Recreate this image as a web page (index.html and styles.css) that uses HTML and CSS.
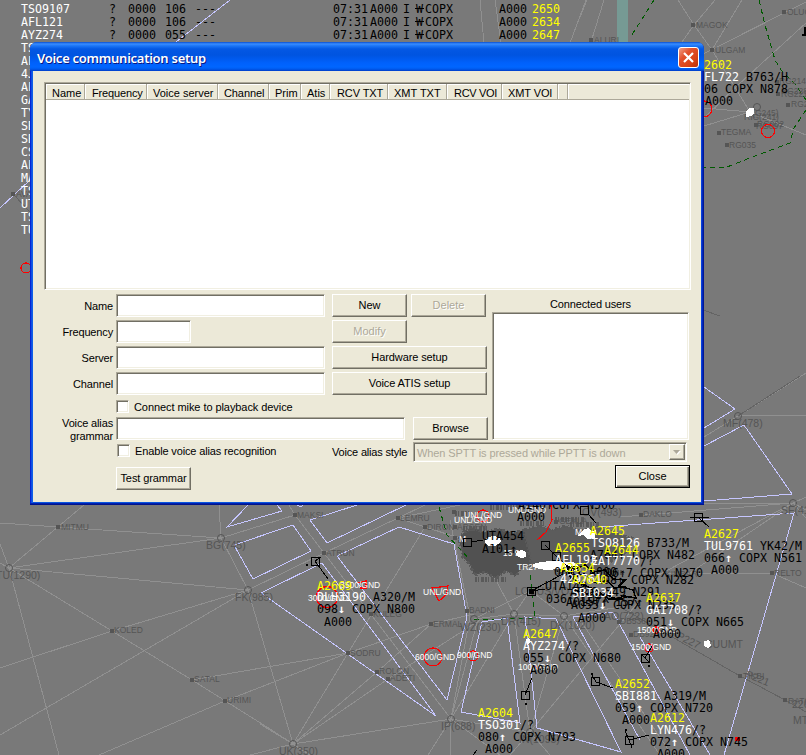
FILE: index.html
```html
<!DOCTYPE html>
<html lang="en">
<head>
<meta charset="utf-8">
<title>Voice communication setup</title>
<link rel="stylesheet" href="styles.css">
</head>
<body>
<svg class="radar" width="806" height="755" viewBox="0 0 806 755">
  <!-- airways -->
  <path class="airway" d="M480 0L484 43M495 0L501 43M586 0L570 43M587 0L580 17M604 0L591 42M678 0L694 25L715 0M694 25L682 42M694 25L712 50L742 0M712 50L750 112M703 54L806 2M806 23L738 85L704 118M704 108L750 112L704 126M750 112L806 135M14 195L30 212
  M0 523L58 527L221 538M84 505L9 568L221 538M9 568L248 590M9 568L112 631L192 680L270 729L310 755M9 568L59 755M0 544L9 568L0 563M0 668L112 631L248 590L0 735M248 590L293 744M219 505L221 538L248 590L324 553L398 518L425 505M221 538L295 515L324 553L451 719M295 515L289 505M192 680L348 653M99 755L225 701L348 653L431 624L474 614M250 755L293 744L451 719M425 527L348 653L293 744L388 679L480 620M293 744L377 672L431 624M293 744L260 724M293 744L310 755
  M451 719L428 755M451 719L450 755M451 719L470 617L450 520M451 719L478 619M451 719L500 755M451 719L514 614L485 560M474 619L514 614L564 616L620 607M514 614L530 732L550 755M530 732L564 616L531 591M530 732L510 755M451 719L530 732L640 600M514 614L530 591L474 619M564 616L660 755M580 620L672 755
  M704 437L738 416L806 415M738 416L806 373M704 503L793 503L620 517M793 503L640 585M793 503L690 573M793 503L806 497M793 503L806 518M793 503L806 510M640 573L772 573L806 588M398 518L480 545M398 518L460 505"/>
  <path class="airway deep" d="M738 416L800 376M703 310L720 316M620 607L740 676L785 700L806 712M14 195L30 212"/>
  <!-- terrain of overlapping labels around the hub -->
  <path class="terrain" d="M459 539L464 532L474 529L484 532L500 529L512 533L524 530L534 534L530 548L538 556L534 565L522 567L516 576L506 571L496 578L484 572L474 575L470 564L463 558Z"/>
  <path class="terrain light" d="M524 530L540 526L552 530L566 526L580 531L600 527L616 534L632 538L626 552L612 560L600 572L580 566L560 574L546 562L532 566Z"/>
  <path class="clutter" d="M463 528H488M520 523H545M570 524H600M475 579H506M490 507H540M455 513H470M555 519H584M590 572H625"/>
  <!-- borders -->
  <path class="border" d="M654 0L630 38M759 0L765 25L775 60L781 70L795 84L806 100M806 110L794 128L790 143L750 158L727 167L704 167M439 507L447 535L470 560M530 575L535 618L470 620"/>
  <rect class="river" x="617" y="0" width="11" height="43"/>
  <!-- sectors -->
  <path class="sector" d="M176 42L230 0M0 208L30 180M248 505L227 527L282 511L277 505M234 545L293 525L311 551L253 579ZM297 505L301 507L303 505M357 505L310 520L327 543L406 505M261 593L322 563L436 716ZM337 556L399 527L454 544L467 617L447 700ZM482 622L507 618L520 723L461 712ZM525 617L556 619L621 752L537 728ZM640 740L573 617L613 612L690 755M640 637L710 755M704 387L735 409L704 428M704 446L744 425L792 494L704 501M600 527L794 513L724 755"/>
  <!-- radio beacons -->
  <g class="beacon">
    <circle cx="221" cy="538" r="3.5"/><circle cx="9" cy="568" r="3.5"/><circle cx="248" cy="590" r="3.5"/><circle cx="293" cy="744" r="3.5"/><circle cx="451" cy="719" r="3.5"/><circle cx="474" cy="619" r="3.5"/><circle cx="514" cy="614" r="3.5"/><circle cx="564" cy="616" r="3.5"/><circle cx="530" cy="732" r="3.5"/><circle cx="738" cy="416" r="3.5"/><circle cx="793" cy="503" r="3.5"/><circle cx="757" cy="107" r="3.5"/>
  </g>
  <g class="beacon-name">
    <text x="206" y="549">BG(745)</text><text x="-4" y="579">TU(1290)</text><text x="235" y="601">FK(985)</text><text x="279" y="755">UK(350)</text><text x="441" y="730">IP(688)</text><text x="460" y="631">WZ(230)</text><text x="501" y="625">DR(415)</text><text x="550" y="629">DK(1020)</text><text x="519" y="743">IN(1095)</text><text x="723" y="427">MF(478)</text><text x="781" y="514">SF(413)</text><text x="582" y="516">OV(493)</text><text x="604" y="620">AO(722)</text><text x="515" y="595">LOUUS/VOJL</text><text x="793" y="724">MTA</text><text x="705" y="648">CUUMT</text>
    <text transform="translate(676 638) rotate(27)">P227</text><text transform="translate(745 677) rotate(22)">P221</text><text x="792" y="708">226</text>
  </g>
  <!-- fixes -->
  <path class="fix" d="M11 194h4M691 25h4M710 50h4M589 40h4M782 12h4M775 82h4M776 94h4M786 105h4M717 133h4M725 145h4M56 527h4M110 631h4M190 680h4M223 701h4M293 515h4M322 553h4M396 518h4M423 527h4M369 614h4M429 624h4M346 653h4M375 672h4M386 679h4M465 611h4M639 515h4M770 573h4M738 676h4M783 700h4M629 635h4M754 125h4M554 522h4M617 622h4M452 512h4M453 527h4M453 538h4"/>
  <g class="fix-name">
    <text x="16" y="197">AVA</text><text x="696" y="28">MAGOK</text><text x="715" y="53">ULGAM</text><text x="594" y="43">ALURI</text><text x="787" y="15">OLUG</text><text x="779" y="84">RG214</text><text x="781" y="94">RG228</text><text x="781" y="97">RG221</text><text x="791" y="107">RG2</text><text x="721" y="135">TEGMA</text><text x="729" y="148">RG035</text><text x="746" y="116">R(G245)</text><text x="744" y="120">RIG(241)</text><text x="757" y="127">RG002</text><text x="756" y="129">RG097</text>
    <text x="61" y="530">MITMU</text><text x="114" y="633">KOLED</text><text x="194" y="682">SATAL</text><text x="227" y="703">URIMI</text><text x="61" y="762">IDAMO</text><text x="297" y="518">MAKSI</text><text x="326" y="556">ATRUN</text><text x="400" y="521">LEMRU</text><text x="427" y="530">DIRON</text><text x="373" y="617">KULEG</text><text x="433" y="627">ERMAL</text><text x="350" y="656">SODRU</text><text x="379" y="674">ROLON</text><text x="390" y="681">ADETI</text><text x="469" y="613">BADNI</text><text x="643" y="517">DAKLO</text><text x="774" y="576">RELTO</text><text x="743" y="679">TIKBI</text><text x="788" y="704">RATO</text><text x="633" y="637">DB920</text><text x="559" y="524">GEKLA</text><text x="620" y="624">DB538</text><text x="665" y="577">KIMBAR</text><text x="457" y="530">ARSEN</text>
  </g>
  <!-- restricted areas -->
  <g class="danger">
    <circle cx="26" cy="268" r="5"/><circle cx="768" cy="131" r="6.5"/><circle cx="704" cy="109" r="8"/><circle cx="327" cy="597" r="10.5"/><circle cx="433" cy="657" r="9"/><circle cx="473" cy="656" r="5"/><circle cx="483" cy="516" r="6"/><circle cx="656" cy="630" r="3"/><circle cx="649" cy="648" r="4"/>
    <path d="M432 588L448 586L446 595L439 601ZM551 505L552 520L546 532L537 540M357 583L366 581L366 588L360 588M535 666L538 669M736 738h3v2h-3z"/>
  </g>
  <g class="area-name">
    <text x="308" y="601">3000/GND</text><text x="340" y="588">3500/GND</text><text x="423" y="595">UNL/GND</text><text x="415" y="660">6000/GND</text><text x="457" y="658">900/GND</text><text x="464" y="518">UNL/GND</text><text x="454" y="523">UNL/GND</text><text x="508" y="513">UNL/GND</text><text x="518" y="670">1000/GND</text><text x="637" y="633">1500/GND</text><text x="631" y="650">1500/GND</text><text x="517" y="570">TR27</text><text x="503" y="556">15 9</text><text x="575" y="535">M</text><text x="459" y="542">M</text>
  </g>
  <path class="echo" d="M486 538l6-2 8 1 1 5-6 4-7 0-3-3zM517 551l5-1 4 2 0 5-5 1-5-3zM533 564l8-2 10-1 13 1 9 0 5 3-1 6-10 0-8-2-12 1-8-1-6-2zM584 529l5-1 2 3 5-1-1 8-8 1-3-4-6 1zM746 112l3-4 5 0 0 5-3 3-5 1zM704 641l5-1 2 5-3 3-4-2zM526 639l3-1 2 4-4 3z"/>
  <!-- aircraft symbols and leader lines -->
  <path class="plane" d="M311.5 557.5h8v8h-8zM315 561L328 579M463.5 538.5h8v8h-8zM471 542L483 540M580.5 506.5h8v8h-8zM588 514L596 523M694.5 513.5h8v8h-8zM690 517H709M698 517L709 527M541.5 541.5h8v8h-8zM545 545L556 556M552.5 552.5h8v8h-8zM556 556L572 570M527.5 587.5h8v8h-8zM531 591L563 574M531 591L545 589M521.5 691.5h8v8h-8zM525 695L532 678M591.5 677.5h8v8h-8zM591 673L596 682L613 688M641.5 654.5h8v8h-8zM642 655L649 662M645 658L652 646M625.5 736.5h8v8h-8zM625 731L629 740L649 735M629 740L632 748M571.5 566.5h8v8h-8zM473 755L477 750M315 561L321 557"/>
  <path class="corner" d="M805 27V35H802"/>
  <path class="trail" d="M306 564h2v2h-2zM525 703h2v2h-2zM648 665h2v2h-2zM625 729h2v2h-2zM591 673h2v2h-2zM529 589h5v5h-5z"/>
  <path class="knot" d="M567 566l8 3 10-4 8 7 12-2 8 9 12 1-6 6 14 4 3 8-12-2-7 3-12-5-9 2-5-8-12-5-9-7zM570 578l14-4 10 8 14-1 6 7 12-1M575 590l12 4 10-3 12 8 14 0"/>
  <!-- aircraft labels -->
  <g class="tag">
    <text x="697" y="69" class="code">A2602</text><text x="697" y="81"><tspan class="call">AFL722</tspan> B763/H</text><text x="697" y="93">106 COPX N878</text><text x="705" y="105">A000</text>
    <text x="317" y="590" class="code">A2669</text><text x="317" y="601"><tspan class="call">DLH3190</tspan> A320/M</text><text x="317" y="613">098<tspan class="arrow">↓</tspan> COPX N800</text><text x="324" y="626">A000</text>
    <text x="482" y="540">UTA454</text><text x="482" y="553">A101↑</text><text x="518" y="509">A140↑</text><text x="517" y="521">A000</text><text x="552" y="509">COPX N500</text>
    <text x="545" y="590">UTA149</text><text x="546" y="603">036↑ COPX</text><text x="590" y="559">A764↑ COPX N482</text><text x="605" y="577">06↑7 COPX N270</text><text x="596" y="584">A08↑ COPX N282</text><text x="554" y="576">068↑ A000</text><text x="570" y="596">A040 549 N291</text><text x="566" y="606">A0157↑ 157↑</text>
    <text x="590" y="535" class="code">A2645</text><text x="591" y="547"><tspan class="call">TSO8126</tspan> B733/M</text>
    <text x="555" y="552" class="code">A2655</text><text x="555" y="564" class="call">AFL193</text><text x="604" y="554" class="code">A2644</text><text x="591" y="565"><tspan class="call">EAT7770</tspan>/?</text><text x="560" y="572" class="code">A2654</text><text x="560" y="583" class="call">429761</text><text x="572" y="584" class="code">A2640</text><text x="572" y="597" class="call">SBI034</text><text x="571" y="609">A055<tspan class="arrow">↓</tspan> COPX N235</text><text x="578" y="622">A000</text>
    <text x="646" y="602" class="code">A2637</text><text x="646" y="614"><tspan class="call">GAI708</tspan>/?</text><text x="646" y="626">051<tspan class="arrow">↓</tspan> COPX N665</text><text x="653" y="638">A000</text>
    <text x="704" y="538" class="code">A2627</text><text x="704" y="550"><tspan class="call">TUL9761</tspan> YK42/M</text><text x="704" y="562">066<tspan class="arrow">↑</tspan> COPX N561</text><text x="711" y="574">A000</text>
    <text x="523" y="638" class="code">A2647</text><text x="523" y="650"><tspan class="call">AYZ274</tspan>/?</text><text x="523" y="662">055<tspan class="arrow">↓</tspan> COPX N680</text><text x="530" y="674">A000</text>
    <text x="478" y="717" class="code">A2604</text><text x="478" y="729"><tspan class="call">TSO301</tspan>/?</text><text x="478" y="741">080<tspan class="arrow">↑</tspan> COPX N793</text><text x="485" y="753">A000</text>
    <text x="615" y="688" class="code">A2652</text><text x="615" y="700"><tspan class="call">SBI881</tspan> A319/M</text><text x="615" y="712">059<tspan class="arrow">↑</tspan> COPX N720</text><text x="622" y="724">A000</text>
    <text x="650" y="722" class="code">A2612</text><text x="650" y="734"><tspan class="call">LYN476</tspan>/?</text><text x="650" y="746">072<tspan class="arrow">↑</tspan> COPX N745</text><text x="657" y="758">A000</text>
  </g>
  <!-- flight list -->
  <g class="tag">
    <g class="call">
      <text x="21" y="0">TSO301</text><text x="21" y="13">TSO9107</text><text x="21" y="26">AFL121</text><text x="21" y="39">AYZ274</text><text x="21" y="52">TS</text><text x="21" y="65">AF</text><text x="21" y="78">4J</text><text x="21" y="91">AF</text><text x="21" y="104">GA</text><text x="21" y="117">TY</text><text x="21" y="130">SB</text><text x="21" y="143">SB</text><text x="21" y="156">CS</text><text x="21" y="169">AF</text><text x="21" y="182">MA</text><text x="21" y="195">TS</text><text x="21" y="208">UT</text><text x="21" y="221">TS</text><text x="21" y="234">TU</text>
    </g>
    <text x="109" y="13">?</text><text x="128" y="13">0000</text><text x="165" y="13">106</text><text x="195" y="13">---</text>
    <text x="109" y="26">?</text><text x="128" y="26">0000</text><text x="165" y="26">106</text><text x="195" y="26">---</text>
    <text x="109" y="39">?</text><text x="128" y="39">0000</text><text x="165" y="39">055</text><text x="195" y="39">---</text>
    <text x="333" y="13">07:31</text><text x="370" y="13">A000</text><text x="403" y="13">I</text><text x="416" y="13">W</text><text x="425" y="13">COPX</text><text x="499" y="13">A000</text><text x="532" y="13" class="code">2650</text>
    <text x="333" y="26">07:31</text><text x="370" y="26">A000</text><text x="403" y="26">I</text><text x="416" y="26">W</text><text x="425" y="26">COPX</text><text x="499" y="26">A000</text><text x="532" y="26" class="code">2634</text>
    <text x="333" y="39">07:31</text><text x="370" y="39">A000</text><text x="403" y="39">I</text><text x="416" y="39">W</text><text x="425" y="39">COPX</text><text x="499" y="39">A000</text><text x="532" y="39" class="code">2647</text>
    <path class="strike" d="M415 8.5h9M415 21.5h9M415 34.5h9"/>
  </g>
</svg>

<section class="dialog">
  <header class="titlebar">
    <h1>Voice communication setup</h1>
    <button class="close-x" aria-label="Close window"><svg width="13" height="13" viewBox="0 0 13 13"><path d="M2 2L11 11M11 2L2 11"/></svg></button>
  </header>
  <div class="client">
    <div class="list sunken">
      <div class="columns">
        <span class="c-name">Name</span><span class="c-freq">Frequency</span><span class="c-server">Voice server</span><span class="c-chan">Channel</span><span class="c-prim">Prim</span><span class="c-atis">Atis</span><span class="c-rt">RCV TXT</span><span class="c-xt">XMT TXT</span><span class="c-rv">RCV VOI</span><span class="c-xv">XMT VOI</span><span class="c-blank"></span><span class="c-rest"></span>
      </div>
    </div>
    <div class="form">
      <div class="left">
        <div class="row"><label>Name</label><i class="field sunken"></i><button class="btn">New</button><button class="btn off second">Delete</button></div>
        <div class="row"><label>Frequency</label><i class="field short sunken"></i><button class="btn off">Modify</button></div>
        <div class="row"><label>Server</label><i class="field sunken"></i><button class="btn wide">Hardware setup</button></div>
        <div class="row"><label>Channel</label><i class="field sunken"></i><button class="btn wide">Voice ATIS setup</button></div>
        <div class="row check"><i class="box sunken"></i><span>Connect mike to playback device</span></div>
        <div class="row"><label class="two">Voice alias<br>grammar</label><i class="field long sunken"></i><button class="btn browse">Browse</button></div>
      </div>
      <div class="users">
        <div class="caption">Connected users</div>
        <div class="userlist sunken"></div>
      </div>
    </div>
    <div class="style-row">
      <i class="box sunken"></i><span class="enable">Enable voice alias recognition</span><span class="style-label">Voice alias style</span>
      <div class="combo sunken"><span>When SPTT is pressed while PPTT is down</span><b><svg width="8" height="5" viewBox="0 0 8 5"><path class="hi" d="M1 1H8L4.500 5Z"/><path d="M0 0H7L3.500 4Z"/></svg></b></div>
    </div>
    <div class="footer"><button class="btn test">Test grammar</button><button class="btn default">Close</button></div>
  </div>
</section>
</body>
</html>
```
FILE: styles.css
```css
* { box-sizing: border-box; }
body {
  margin: 0;
  width: 806px;
  height: 755px;
  overflow: hidden;
  position: relative;
  background: #797979;
  font-family: "Liberation Sans", Arial, sans-serif;
  font-size: 11px;
  color: #000;
}

/* radar map */
.radar { display: block; }
.radar path, .radar circle { fill: none; shape-rendering: crispEdges; }
.radar .airway { stroke: #909090; }
.radar .deep { stroke: #646464; }
.radar .terrain { fill: #515151; stroke: #5a5a5a; stroke-width: 3; stroke-dasharray: 3 2 1 2; }
.radar .light { fill: #5c5c5c; }
.radar .clutter { stroke: #5a5a5a; stroke-width: 5; stroke-dasharray: 2 1 1 2 3 1; }
.radar .border { stroke: #005a00; stroke-dasharray: 5 4; }
.radar .sector { stroke: #c6c6ff; }
.radar .river { fill: #769a94; }
.radar .beacon circle { stroke: #555; shape-rendering: auto; }
.beacon-name { fill: #555; font-size: 10.5px; }
.radar .fix { stroke: #555; stroke-width: 4; }
.fix-name { fill: #555; font-size: 8.5px; }
.radar .danger circle, .radar .danger path { stroke: #f00; stroke-width: 1.2; }
.area-name { fill: #fff; font-size: 8.5px; }
.radar .echo { fill: #fff; }
.radar .plane { stroke: #000; }
.radar .corner { stroke: #000; stroke-width: 2; }
.radar .trail { fill: #000; }
.radar .knot { stroke: #000; stroke-width: 1.5; }
.tag { font-family: "DejaVu Sans Mono", monospace; font-size: 11.63px; fill: #000; }
.tag text { white-space: pre; }
.tag .call { fill: #fff; }
.tag .arrow { fill: #fff; font-weight: bold; }
.tag .code { fill: #ff0; }
.radar .strike { stroke: #000; }

/* dialog frame */
.dialog {
  position: absolute;
  left: 30px;
  top: 42px;
  width: 674px;
  height: 463px;
  padding: 0 3px 3px;
  border-radius: 7px 7px 0 0;
  background: linear-gradient(90deg, #0019cf 0, #0831d9 1px, #166aee 2px, #0855dd 3px, #0855dd 671px, #0831d9 672px, #001da0 673px, #00138c 674px);
  box-shadow: inset 0 -1px #00138c, inset 0 -2px #0020b0;
}
.titlebar {
  display: flex;
  align-items: center;
  justify-content: space-between;
  height: 29px;
  margin: 0 -3px;
  padding: 2px 5px 0 7px;
  border-radius: 7px 7px 0 0;
  background: linear-gradient(#0a4fd0 0, #3a8dff 2px, #1a74f5 4px, #0458e4 7px, #0054e0 13px, #0061fc 21px, #0066ff 25px, #005bee 27px, #003dc8 29px);
}
.titlebar h1 {
  margin: 0;
  font: 600 13px/18px "Noto Sans", "Open Sans", sans-serif;
  letter-spacing: -.26px;
  color: #fff;
  text-shadow: 1px 1px #0a1883;
}
.close-x {
  display: grid;
  place-items: center;
  width: 21px;
  height: 21px;
  padding: 0;
  border: 1px solid #fff;
  border-radius: 3px;
  background: linear-gradient(135deg, #f0a088 0, #e2512c 35%, #d94416 70%, #b83008);
}
.close-x path { stroke: #fff; stroke-width: 2.2; }
.client { height: 431px; padding: 11px 9px 0 11px; background: #ece9d8; }
.sunken {
  border: 1px solid;
  border-color: #aca899 #fff #fff #aca899;
  background: #fff;
  box-shadow: inset 1px 1px #716f64, inset -1px -1px #f1efe2;
}

/* session list */
.list { height: 208px; width: 647px; padding: 1px; }
.columns { display: flex; height: 16px; }
.columns span {
  flex: none;
  padding-left: 6px;
  line-height: 18px;
  white-space: nowrap;
  background: #ece9d8;
  border: solid #aca899;
  border-width: 0 1px 1px 0;
  box-shadow: inset 1px 1px #fff;
}
.c-name { width: 39px; }
.columns .c-freq { width: 62px; padding-left: 7px; letter-spacing: -.15px; }
.c-server { width: 71px; }
.c-chan { width: 51px; letter-spacing: -.1px; }
.c-prim { width: 32px; }
.c-atis { width: 29px; }
.columns .c-rt { width: 58px; padding-left: 7px; letter-spacing: -.1px; }
.c-xt { width: 59px; letter-spacing: 0; }
.columns .c-rv { width: 55px; padding-left: 7px; letter-spacing: -.3px; }
.c-xv { width: 56px; letter-spacing: -.1px; }
.columns .c-blank { width: 10px; padding: 0; }
.columns .c-rest { flex: 1; padding: 0; border-right: 0; }

/* form */
.form { display: flex; gap: 4px; margin-top: 4px; }
.left { width: 444px; display: flex; flex-direction: column; gap: 3px; }
.row { display: flex; height: 23px; align-items: center; }
.row label { width: 69px; margin-right: 3px; padding-top: 1px; text-align: right; line-height: 13px; letter-spacing: -.15px; }
.row .two { margin-top: 1px; }
.field { width: 209px; height: 23px; margin-right: 7px; }
.short { width: 75px; margin-right: 141px; }
.long { width: 289px; margin-right: 8px; }
.row.check { height: 16px; padding-left: 72px; padding-top: 1px; letter-spacing: -.07px; }
.box { width: 13px; height: 13px; margin-right: 5px; }
.btn {
  width: 75px;
  height: 23px;
  padding: 0 0 1px;
  font: 11px "Liberation Sans", Arial, sans-serif;
  color: #000;
  background: #ece9d8;
  border: 1px solid;
  border-color: #fff #716f64 #716f64 #fff;
  box-shadow: inset -1px -1px #aca899;
}
.off { color: #aca899; text-shadow: 1px 1px #fff; }
.second { margin-left: 4px; }
.wide { width: 155px; letter-spacing: -.1px; }
.users { width: 197px; }
.caption { height: 18px; line-height: 20px; text-align: center; letter-spacing: -.15px; }
.userlist { height: 128px; }
.style-row { display: flex; align-items: center; height: 20px; margin-top: 2px; padding-left: 73px; }
.style-row .box { width: 13px; margin-top: -4px; }
.enable { width: 197px; margin-top: -3px; letter-spacing: -.14px; }
.style-label { width: 81px; letter-spacing: -.18px; }
.combo {
  display: flex;
  align-items: center;
  width: 274px;
  height: 20px;
  padding: 1px 1px 1px 3px;
  color: #aca899;
  background: #ece9d8;
}
.combo span { flex: 1; padding-top: 1px; white-space: nowrap; letter-spacing: -.1px; }
.combo b {
  display: grid;
  place-items: center;
  width: 16px;
  height: 16px;
  border: 1px solid;
  border-color: #fff #716f64 #716f64 #fff;
  box-shadow: inset -1px -1px #aca899;
}
.combo path { fill: #aca899; }
.combo .hi { fill: #fff; }
.footer { display: flex; justify-content: space-between; align-items: flex-start; margin-top: 3px; padding: 0 2px 0 72px; }
.test { margin-top: 2px; letter-spacing: -.1px; }
.default { border-color: #000; box-shadow: inset 1px 1px #fff, inset -1px -1px #716f64, inset -2px -2px #aca899; }
```
